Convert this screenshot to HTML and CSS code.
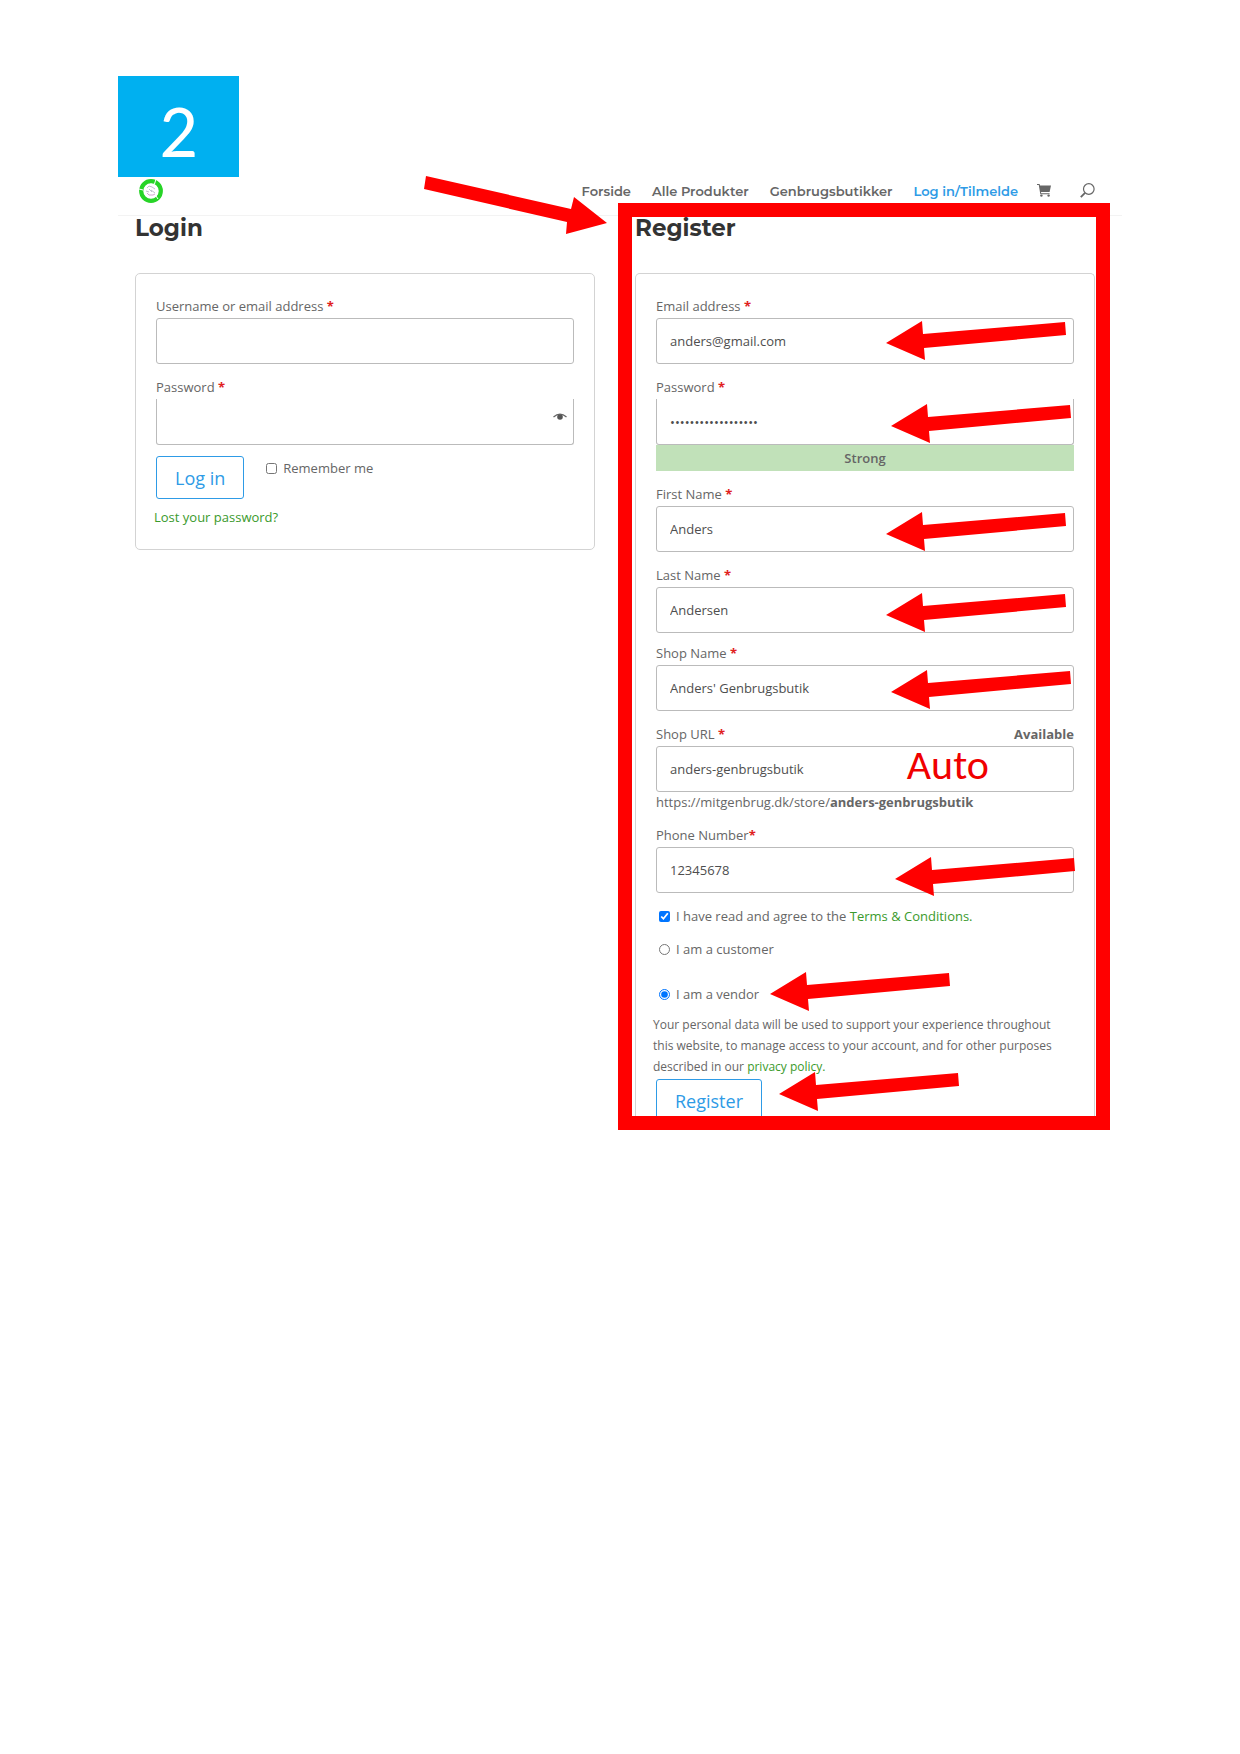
FILE: index.html
```html
<!DOCTYPE html>
<html lang="da">
<head>
    <meta charset="UTF-8">
    <meta name="viewport" content="width=device-width, initial-scale=1.0">
    <title>Log in/Tilmelde</title>
    <link rel="stylesheet" href="styles.css">
</head>
<body>
    <svg class="defs" width="0" height="0" aria-hidden="true">
        <symbol id="arrow" viewBox="0 0 180 39">
            <polygon points="0,22 36,0 37,13 179,1 180,14 38,27 39,39"/>
        </symbol>
    </svg>

    <div class="step">2</div>

    <header class="header">
        <a href="#" class="logo" aria-label="Mit Genbrug">
            <svg width="24" height="24" viewBox="0 0 24 24">
                <circle cx="12" cy="12" r="9.8" fill="none" stroke="#27d427" stroke-width="4.2"/>
                <path d="M17 0l-1.500 5M19 20l-2-3M0 10l4 1" stroke="#fff" stroke-width="1"/>
                <circle cx="12" cy="12" r="7.2" fill="#fff"/>
                <path d="M8 9l2-2 3 1M7 12l3 1M12 11l4 3M13 8l3 2M10 10l3 3" fill="none" stroke="#b0b0c0" stroke-width="0.8"/>
                <path d="M8 14l2 2h4l2-1" fill="none" stroke="#d09acb" stroke-width="0.9"/>
            </svg>
        </a>
        <nav class="nav">
            <a href="#">Forside</a>
            <a href="#">Alle Produkter</a>
            <a href="#">Genbrugsbutikker</a>
            <a href="#" class="active">Log in/Tilmelde</a>
        </nav>
        <a href="#" class="cart" aria-label="Cart">
            <svg width="14" height="13" viewBox="0 0 14 13" fill="#666">
                <path d="M0 0h2.600l.4 1.400h11L12.600 8H4l.2 1.200h8.400v1H3.300L1.800 1H0z"/>
                <circle cx="4.400" cy="11.600" r="1.200"/>
                <circle cx="11.600" cy="11.600" r="1.200"/>
            </svg>
        </a>
        <button type="button" class="search" aria-label="Search">
            <svg width="15" height="15" viewBox="0 0 15 15" fill="none" stroke="#666">
                <circle cx="8.800" cy="6" r="5.300" stroke-width="1.200"/>
                <path d="M5 9.800L.8 14.200" stroke-width="1.800"/>
            </svg>
        </button>
        <svg class="point-register" viewBox="0 0 183 58" aria-hidden="true">
            <polygon points="2,0 147,33 150,21 183,47 142,58 143,46 0,13"/>
        </svg>
    </header>

    <main class="columns">
        <section class="column">
            <h2>Login</h2>
            <form class="panel">
                <div class="field">
                    <label for="username">Username or email address <b>*</b></label>
                    <input type="text" id="username">
                </div>
                <div class="field">
                    <label for="password">Password <b>*</b></label>
                    <div class="control">
                        <input type="password" id="password" class="open-top">
                        <button type="button" class="eye" aria-label="Show password">
                            <svg width="14" height="8" viewBox="0 0 14 8">
                                <path d="M.5 4Q7-1.800 13.500 4" fill="none" stroke="#666" stroke-width="1.200"/>
                                <circle cx="7" cy="4" r="2.800" fill="#555"/>
                            </svg>
                        </button>
                    </div>
                </div>
                <div class="login-row">
                    <button type="button" class="button">Log in</button>
                    <label class="check"><input type="checkbox"> Remember me</label>
                </div>
                <a href="#" class="lost">Lost your password?</a>
            </form>
        </section>

        <section class="column register">
            <h2>Register</h2>
            <form class="panel cut">
                <div class="field">
                    <label for="email">Email address <b>*</b></label>
                    <div class="control">
                        <input type="text" id="email" value="anders@gmail.com">
                        <svg class="arrow high" aria-hidden="true"><use href="#arrow"/></svg>
                    </div>
                </div>
                <div class="field">
                    <label for="new-password">Password <b>*</b></label>
                    <div class="control">
                        <input type="password" id="new-password" class="open-top" value="genbrugsbutik12345">
                        <svg class="arrow far" aria-hidden="true"><use href="#arrow"/></svg>
                    </div>
                    <div class="strength">Strong</div>
                </div>
                <div class="field">
                    <label for="first-name">First Name <b>*</b></label>
                    <div class="control">
                        <input type="text" id="first-name" value="Anders">
                        <svg class="arrow" aria-hidden="true"><use href="#arrow"/></svg>
                    </div>
                </div>
                <div class="field">
                    <label for="last-name">Last Name <b>*</b></label>
                    <div class="control">
                        <input type="text" id="last-name" value="Andersen">
                        <svg class="arrow" aria-hidden="true"><use href="#arrow"/></svg>
                    </div>
                </div>
                <div class="field close">
                    <label for="shop-name">Shop Name <b>*</b></label>
                    <div class="control">
                        <input type="text" id="shop-name" value="Anders' Genbrugsbutik">
                        <svg class="arrow far" aria-hidden="true"><use href="#arrow"/></svg>
                    </div>
                </div>
                <div class="field">
                    <div class="label-row">
                        <label for="shop-url">Shop URL <b>*</b></label>
                        <strong>Available</strong>
                    </div>
                    <div class="control">
                        <input type="text" id="shop-url" value="anders-genbrugsbutik">
                        <span class="auto">Auto</span>
                    </div>
                    <div class="url">https://mitgenbrug.dk/store/<strong>anders-genbrugsbutik</strong></div>
                </div>
                <div class="field">
                    <label for="phone">Phone Number<b>*</b></label>
                    <div class="control">
                        <input type="text" id="phone" value="12345678">
                        <svg class="arrow phone" aria-hidden="true"><use href="#arrow"/></svg>
                    </div>
                </div>
                <div class="choices">
                    <div class="choice">
                        <input type="checkbox" id="terms" checked>
                        <label for="terms">I have read and agree to the <a href="#">Terms &amp; Conditions.</a></label>
                    </div>
                    <div class="choice">
                        <input type="radio" name="role" id="customer">
                        <label for="customer">I am a customer</label>
                    </div>
                    <div class="choice vendor">
                        <input type="radio" name="role" id="vendor" checked>
                        <label for="vendor">I am a vendor</label>
                        <svg class="arrow" aria-hidden="true"><use href="#arrow"/></svg>
                    </div>
                </div>
                <p class="privacy">Your personal data will be used to support your experience throughout this website, to manage access to your account, and for other purposes described in our <a href="#">privacy policy.</a></p>
                <div class="submit">
                    <div class="submit-crop">
                        <button type="button" class="button">Register</button>
                    </div>
                    <svg class="arrow" aria-hidden="true"><use href="#arrow"/></svg>
                </div>
            </form>
        </section>
    </main>
</body>
</html>
```

FILE: styles.css
```css
* {
    box-sizing: border-box;
}
body {
    margin: 0;
    padding: 76px 118px;
    background-color: #fff;
    color: #666;
    font-family: "Open Sans", "Noto Sans", sans-serif;
    font-size: 13px;
    line-height: 20px;
}
a {
    color: #3a9a2c;
    text-decoration: none;
}
button {
    font-family: inherit;
    cursor: pointer;
}
.defs {
    position: absolute;
}
.step {
    display: flex;
    justify-content: center;
    align-items: center;
    width: 121px;
    height: 101px;
    padding-top: 8px;
    background-color: #00b0f0;
    color: #fff;
    font-family: Calibri, Carlito, Lato, sans-serif;
    font-size: 76px;
    line-height: 1;
}

/* header */
.header {
    position: relative;
    display: flex;
    align-items: center;
    height: 39px;
    padding: 0 27px 11px 21px;
    border-bottom: 1px solid #f3f3f3;
}
.logo,
.cart,
.search {
    display: flex;
}
.nav {
    display: flex;
    gap: 21px;
    margin-left: auto;
    font-family: Montserrat, Inter, sans-serif;
    font-weight: 600;
}
.nav a {
    color: #666;
}
.nav .active {
    color: #2e9be6;
}
.cart {
    margin-left: 19px;
}
.search {
    margin-left: 29px;
    padding: 0;
    border: 0;
    background: none;
}
.point-register {
    position: absolute;
    top: -1px;
    right: 515px;
    z-index: 2;
    width: 183px;
    height: 58px;
    fill: #f00;
}

/* login and register */
.columns {
    display: grid;
    grid-template-columns: 1fr 1fr;
    align-items: start;
    gap: 40px;
    padding: 0 27px 0 17px;
}
.column h2 {
    margin: 0 0 33px;
    color: #333;
    font-family: Montserrat, Inter, sans-serif;
    font-size: 23px;
    line-height: 24px;
    font-weight: 700;
}
.panel {
    padding: 22px 20px;
    border: 1px solid #d3d3d3;
    border-radius: 5px;
}
.panel.cut {
    padding-bottom: 0;
    border-bottom: 0;
    border-radius: 5px 5px 0 0;
}
.register {
    position: relative;
}
.register::after {
    content: "";
    position: absolute;
    inset: -13px -15px -14px -17px;
    border: 14px solid #f00;
    pointer-events: none;
}
.field {
    margin-bottom: 13px;
}
.field.close {
    margin-top: -3px;
}
.field label {
    display: block;
    margin-bottom: 2px;
}
.field b {
    color: #e02020;
}
.label-row {
    display: flex;
    justify-content: space-between;
}
.control {
    position: relative;
}
.field input {
    display: block;
    width: 100%;
    height: 46px;
    padding: 0 13px;
    border: 1px solid #bbb;
    border-radius: 3px;
    background-color: #fff;
    color: #4e4e4e;
    font-family: inherit;
    font-size: 13px;
}
.field .open-top {
    border-top: 0;
    border-radius: 0 0 3px 3px;
}
.eye {
    position: absolute;
    top: 14px;
    right: 7px;
    display: flex;
    padding: 0;
    border: 0;
    background: none;
}
.strength {
    padding: 3px;
    background-color: #c1e1b9;
    font-weight: 600;
    text-align: center;
}
.button {
    height: 43px;
    padding: 0 18px;
    border: 1px solid #2e9be6;
    border-radius: 3px;
    background-color: #fff;
    color: #2e9be6;
    font-size: 18px;
}
.login-row {
    display: flex;
    align-items: flex-start;
    gap: 22px;
    margin-top: -2px;
}
.check {
    display: flex;
    align-items: center;
    gap: 6px;
    margin-top: 2px;
}
.check input,
.choice input {
    width: 11px;
    height: 11px;
    margin: 0;
}
.lost {
    display: block;
    margin: 8px 0 0 -2px;
}
.choices {
    display: flex;
    flex-direction: column;
    gap: 13px;
    padding-left: 3px;
}
.choice {
    position: relative;
    display: flex;
    align-items: center;
    gap: 6px;
}
.choice.vendor {
    margin-top: 12px;
}
.privacy {
    margin: 10px 0 2px -3px;
    font-size: 12px;
    line-height: 21px;
}
.submit {
    position: relative;
}
.submit-crop {
    height: 37px;
    overflow: hidden;
}

/* red notes on top of the form */
.arrow {
    position: absolute;
    top: 6px;
    right: 8px;
    width: 180px;
    height: 39px;
    fill: #f00;
}
.arrow.high {
    top: 3px;
}
.arrow.far {
    top: 5px;
    right: 3px;
}
.arrow.phone {
    top: 10px;
    right: -1px;
}
.vendor .arrow {
    top: -12px;
    left: 111px;
}
.submit .arrow {
    top: -7px;
    left: 123px;
}
.auto {
    position: absolute;
    top: 0;
    right: 85px;
    color: #f00000;
    font-family: Calibri, Carlito, Lato, sans-serif;
    font-size: 42px;
    line-height: 38px;
}
```
